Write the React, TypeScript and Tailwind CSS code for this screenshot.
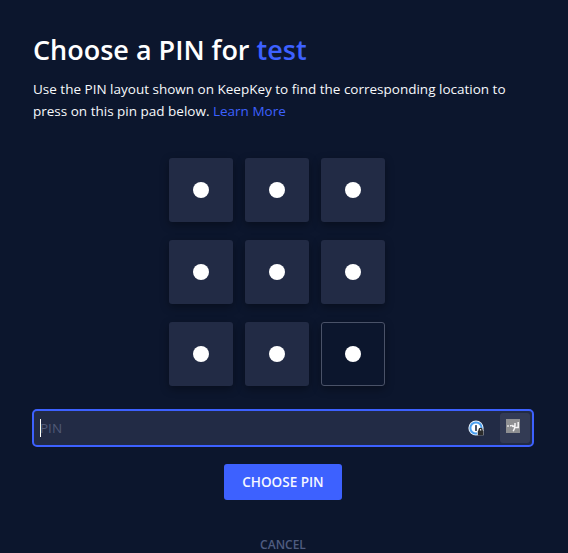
import { useState } from "react";

// ============================================================
// Types
// ============================================================

interface PinKeyProps {
  active?: boolean;
  onPress: () => void;
}

const KEYS = [7, 8, 9, 4, 5, 6, 1, 2, 3];

// ============================================================
// Icons
// ============================================================

/** Password manager key with a small lock badge */
function VaultIcon() {
  return (
    <svg width="18" height="18" viewBox="0 0 18 18" className="shrink-0">
      <circle cx="8" cy="9" r="7.6" fill="#e9f2fb" />
      <circle cx="8" cy="9" r="5.6" fill="#fff" stroke="#4a9ff0" strokeWidth="2" />
      <rect x="7.1" y="6" width="1.8" height="6" rx="0.6" fill="#36435a" />
      <path d="M9.2 11.5l1.8-2.6h3l1.6 2v5.4H9.2z" fill="#f4f8fc" />
      <path d="M11.2 12v-1.2a1.4 1.4 0 0 1 2.8 0V12" fill="none" stroke="#2b2b2b" strokeWidth="1.4" />
      <rect x="9.8" y="11.6" width="5.6" height="4.6" rx="0.4" fill="#2b2b2b" />
    </svg>
  );
}

/** Extension badge at the end of the field */
function ExtensionIcon() {
  return (
    <svg width="14" height="14" viewBox="0 0 14 14">
      <rect width="14" height="14" fill="#8e8f91" />
      <path
        d="M1.2 7h1.6M4 6.8h1.2M5.6 6l1.2 1.4 1.6-.6.2 2.4-1.4 3M9 4v3.6M12.2 3v5.4H8.8"
        fill="none"
        stroke="#f5f5f5"
        strokeWidth="1.5"
      />
    </svg>
  );
}

// ============================================================
// Components
// ============================================================

function PinKey({ active, onPress }: PinKeyProps) {
  return (
    <button
      type="button"
      onClick={onPress}
      className={`flex size-16 items-center justify-center rounded-[3px] shadow-[0_3px_8px_rgba(0,0,0,0.35)] ${
        active ? "border border-[#4a5268] bg-[#0c162d]" : "bg-[#222b45]"
      }`}
    >
      <span className="size-4 rounded-full bg-white" />
    </button>
  );
}

export default function App() {
  const [pin, setPin] = useState("");

  return (
    <main className="h-[553px] w-[568px] overflow-hidden bg-[#0c162d] px-8 pt-[31px] font-['Open_Sans','Noto_Sans',sans-serif] text-white">
      <h1 className="pl-px text-[27px] leading-[38px] font-semibold whitespace-nowrap">
        Choose a PIN for <span className="text-[#3d61ff]">test</span>
      </h1>
      <p className="mt-[9px] pl-px text-[13.5px] leading-[22px] whitespace-nowrap text-[#f7f9fc]">
        Use the PIN layout shown on KeepKey to find the corresponding location to
        <br />
        press on this pin pad below. <a className="text-[#3d61ff]">Learn More</a>
      </p>

      {/* Pin pad */}
      <div className="mt-9 ml-[137px] grid w-fit grid-cols-3 gap-x-3 gap-y-[18px]">
        {KEYS.map((key) => (
          <PinKey key={key} active={key === 3} onPress={() => setPin(pin + key)} />
        ))}
      </div>

      <div className="mt-[23px] flex h-[38px] w-[502px] items-center rounded-[5px] border-2 border-[#3d61ff] bg-[#222b45] pr-0.5 pl-1.5">
        <span className="h-[18px] w-px bg-white" />
        <span className="-ml-px flex-1 text-[13.5px] text-[#4f5977]">{pin ? "•".repeat(pin.length) : "PIN"}</span>
        <VaultIcon />
        <span className="ml-[14px] flex size-[30px] items-center justify-center rounded-[3px] bg-[#333b54] pr-1 pb-1">
          <ExtensionIcon />
        </span>
      </div>

      <div className="flex w-[502px] flex-col items-center">
        <button
          type="button"
          className="mt-[17px] h-9 w-[118px] rounded-[3px] bg-[#3d61ff] text-[13.5px] font-semibold whitespace-nowrap text-[#f5f7ff]"
        >
          CHOOSE PIN
        </button>
        <button type="button" className="mt-9 text-xs leading-[18px] font-semibold text-[#4f5c80]">
          CANCEL
        </button>
      </div>
    </main>
  );
}
